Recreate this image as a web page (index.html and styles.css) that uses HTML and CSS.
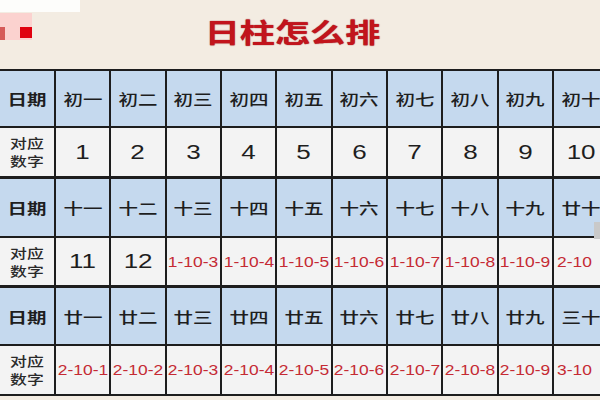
FILE: index.html
```html
<!DOCTYPE html>
<html lang="zh-CN">
<head>
<meta charset="utf-8">
<title>日柱怎么排</title>
<link rel="stylesheet" href="styles.css">
</head>
<body>
<div class="page">
  <div class="mark">
    <div class="mark-white"></div>
    <div class="mark-pink"></div>
    <div class="mark-dark"></div>
    <div class="mark-red"></div>
  </div>
  <header class="head">
    <h1 class="title"><span class="sx">日柱怎么排</span></h1>
  </header>
  <div class="sheet">
    <div class="block b1">
      <div class="cell hd first"><span class="sx">日期</span></div>
      <div class="cell hd"><span class="sx">初一</span></div>
      <div class="cell hd"><span class="sx">初二</span></div>
      <div class="cell hd"><span class="sx">初三</span></div>
      <div class="cell hd"><span class="sx">初四</span></div>
      <div class="cell hd"><span class="sx">初五</span></div>
      <div class="cell hd"><span class="sx">初六</span></div>
      <div class="cell hd"><span class="sx">初七</span></div>
      <div class="cell hd"><span class="sx">初八</span></div>
      <div class="cell hd"><span class="sx">初九</span></div>
      <div class="cell hd"><span class="sx">初十</span></div>
      <div class="cell lbl"><span class="sx">对应<br>数字</span></div>
      <div class="cell num"><span class="sx">1</span></div>
      <div class="cell num"><span class="sx">2</span></div>
      <div class="cell num"><span class="sx">3</span></div>
      <div class="cell num"><span class="sx">4</span></div>
      <div class="cell num"><span class="sx">5</span></div>
      <div class="cell num"><span class="sx">6</span></div>
      <div class="cell num"><span class="sx">7</span></div>
      <div class="cell num"><span class="sx">8</span></div>
      <div class="cell num"><span class="sx">9</span></div>
      <div class="cell num"><span class="sx">10</span></div>
    </div>
    <div class="block b2">
      <div class="cell hd first"><span class="sx">日期</span></div>
      <div class="cell hd"><span class="sx">十一</span></div>
      <div class="cell hd"><span class="sx">十二</span></div>
      <div class="cell hd"><span class="sx">十三</span></div>
      <div class="cell hd"><span class="sx">十四</span></div>
      <div class="cell hd"><span class="sx">十五</span></div>
      <div class="cell hd"><span class="sx">十六</span></div>
      <div class="cell hd"><span class="sx">十七</span></div>
      <div class="cell hd"><span class="sx">十八</span></div>
      <div class="cell hd"><span class="sx">十九</span></div>
      <div class="cell hd"><span class="sx">廿十</span></div>
      <div class="cell lbl"><span class="sx">对应<br>数字</span></div>
      <div class="cell num"><span class="sx">11</span></div>
      <div class="cell num"><span class="sx">12</span></div>
      <div class="cell red"><span class="sx">1-10-3</span></div>
      <div class="cell red"><span class="sx">1-10-4</span></div>
      <div class="cell red"><span class="sx">1-10-5</span></div>
      <div class="cell red"><span class="sx">1-10-6</span></div>
      <div class="cell red"><span class="sx">1-10-7</span></div>
      <div class="cell red"><span class="sx">1-10-8</span></div>
      <div class="cell red"><span class="sx">1-10-9</span></div>
      <div class="cell red cut"><span class="sx">2-10</span></div>
    </div>
    <div class="block b3">
      <div class="cell hd first"><span class="sx">日期</span></div>
      <div class="cell hd"><span class="sx">廿一</span></div>
      <div class="cell hd"><span class="sx">廿二</span></div>
      <div class="cell hd"><span class="sx">廿三</span></div>
      <div class="cell hd"><span class="sx">廿四</span></div>
      <div class="cell hd"><span class="sx">廿五</span></div>
      <div class="cell hd"><span class="sx">廿六</span></div>
      <div class="cell hd"><span class="sx">廿七</span></div>
      <div class="cell hd"><span class="sx">廿八</span></div>
      <div class="cell hd"><span class="sx">廿九</span></div>
      <div class="cell hd"><span class="sx">三十</span></div>
      <div class="cell lbl"><span class="sx">对应<br>数字</span></div>
      <div class="cell red"><span class="sx">2-10-1</span></div>
      <div class="cell red"><span class="sx">2-10-2</span></div>
      <div class="cell red"><span class="sx">2-10-3</span></div>
      <div class="cell red"><span class="sx">2-10-4</span></div>
      <div class="cell red"><span class="sx">2-10-5</span></div>
      <div class="cell red"><span class="sx">2-10-6</span></div>
      <div class="cell red"><span class="sx">2-10-7</span></div>
      <div class="cell red"><span class="sx">2-10-8</span></div>
      <div class="cell red"><span class="sx">2-10-9</span></div>
      <div class="cell red cut"><span class="sx">3-10</span></div>
    </div>
    <div class="edge"></div>
  </div>
</div>
</body>
</html>
```
FILE: styles.css
```css
html, body {
  margin: 0;
  padding: 0;
  width: 600px;
  height: 400px;
  overflow: hidden;
  background: #f3ece2;
}

.page {
  position: relative;
  width: 600px;
  height: 400px;
  overflow: hidden;
  font-family: "Noto Sans CJK SC", "Noto Sans", sans-serif;
  color: #1c1c1c;
}

.sx {
  display: inline-block;
  transform: scaleX(1.3);
}

/* top-left blurred mark */
.mark-white {
  position: absolute;
  left: 0; top: 0;
  width: 80px; height: 12px;
  background: #fdfdfb;
}
.mark-pink {
  position: absolute;
  left: 0; top: 13px;
  width: 32px; height: 27px;
  background: #fbd2cf;
}
.mark-dark {
  position: absolute;
  left: 0; top: 27px;
  width: 5px; height: 13px;
  background: #d65a58;
}
.mark-red {
  position: absolute;
  left: 20px; top: 27px;
  width: 12px; height: 11px;
  background: #e0000e;
}

.head {
  height: 69px;
  display: flex;
  justify-content: center;
  align-items: flex-start;
  padding-right: 16px;
  box-sizing: border-box;
}

.title {
  margin: 18px 0 0;
  font-size: 27px;
  line-height: 27px;
  font-weight: 700;
  color: #c2141c;
  text-shadow: 0 0 1px #8d0d12;
}

.sheet {
  position: relative;
  width: 620px;
  background: #1d1d1d;
  padding: 2px 0;
  display: flex;
  flex-direction: column;
  gap: 3px;
}

.block {
  display: grid;
  grid-template-columns: 54px repeat(10, 53.35px);
  column-gap: 2px;
  row-gap: 2px;
}
.b1 { grid-template-rows: 55px 48px; }
.b2 { grid-template-rows: 57px 47px; }
.b3 { grid-template-rows: 56px 48px; }

.cell {
  display: flex;
  align-items: center;
  justify-content: center;
  overflow: hidden;
  white-space: nowrap;
  background: #f3f3f3;
}

.hd {
  background: #c5d9ee;
  font-size: 15px;
  font-weight: 500;
  color: #1e1e1e;
}
.first {
  font-weight: 700;
}

.lbl {
  font-size: 13px;
  line-height: 18px;
  font-weight: 500;
  color: #2a2a2a;
  white-space: normal;
  text-align: center;
}

.num {
  font-family: "Liberation Sans", Arial, sans-serif;
  font-size: 20px;
  color: #1e1e1e;
}

.red {
  font-family: "Liberation Sans", Arial, sans-serif;
  font-size: 14.5px;
  color: #c52a33;
}
.red .sx {
  transform: scaleX(1.2);
}

.cut {
  justify-content: flex-start;
  padding-left: 6px;
}

.edge {
  position: absolute;
  left: 594px;
  top: 153px;
  width: 6px;
  height: 17px;
  background: #c9c9c9;
}
```
